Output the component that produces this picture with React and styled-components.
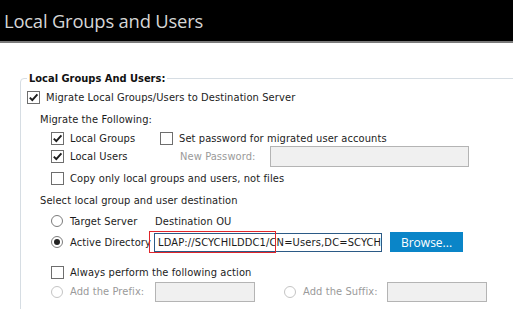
import React from "react";
import styled, { createGlobalStyle, css } from "styled-components";

const Global = createGlobalStyle`
  html, body { margin: 0; padding: 0; background: #fff; overflow: hidden; }
  body { font-family: "DejaVu Sans Condensed", "DejaVu Sans", sans-serif; font-stretch: condensed; font-size: 11px; color: #1c1c1c; letter-spacing: 0.1px; }
`;

const Page = styled.div`
  width: 513px;
  height: 309px;
  overflow: hidden;
`;

const TitleBar = styled.header`
  height: 41px;
  background: #000;
  border-bottom: 2px solid #7a7a7a;
  display: flex;
  align-items: center;
  padding-left: 4px;
`;

const Title = styled.h1`
  margin: 0;
  font-family: "Open Sans", "Noto Sans", sans-serif;
  font-stretch: normal;
  font-weight: 400;
  font-size: 18.4px;
  color: #d6d6d6;
  letter-spacing: -0.2px;
`;

const Group = styled.fieldset`
  margin: 28px 0 0 20px;
  width: 520px;
  height: 260px;
  border: 1px solid #d6dde3;
  border-radius: 4px 0 0 0;
  padding: 0 0 0 6px;
  box-sizing: border-box;
`;

const Legend = styled.legend`
  font-weight: bold;
  padding: 0 2px;
  line-height: 15px;
  color: #111;
  letter-spacing: 0;
`;

const Column = styled.div`
  display: flex;
  flex-direction: column;
`;

const Row = styled.div`
  display: flex;
  align-items: center;
  height: ${(p) => p.$h}px;
  padding-left: ${(p) => p.$indent || 0}px;
  margin-top: ${(p) => p.$mt || 0}px;
  position: relative;
`;

const Cell = styled.div`
  display: flex;
  align-items: center;
  width: ${(p) => (p.$w ? `${p.$w}px` : "auto")};
  flex: none;
  padding-left: ${(p) => p.$pl || 0}px;
  box-sizing: border-box;
`;

const Label = styled.span`
  white-space: nowrap;
  color: ${(p) => (p.$muted ? "#9a9a9a" : "#1c1c1c")};
`;

const Box = styled.span`
  width: 13px;
  height: 13px;
  box-sizing: border-box;
  border: 1px solid #6e6e6e;
  background: #fff;
  display: inline-flex;
  align-items: center;
  justify-content: center;
  flex: none;
  margin-right: 6px;
`;

const Radio = styled.span`
  width: 12px;
  height: 12px;
  box-sizing: border-box;
  border-radius: 50%;
  border: 1px solid ${(p) => (p.$disabled ? "#c4c4c4" : "#7c7c7c")};
  background: #fff;
  display: inline-flex;
  align-items: center;
  justify-content: center;
  flex: none;
  margin-right: 7px;
  ${(p) =>
    p.$checked &&
    css`
      &::after {
        content: "";
        width: 6px;
        height: 6px;
        border-radius: 50%;
        background: #222;
      }
    `}
`;

const TextBox = styled.div`
  width: ${(p) => p.$w}px;
  height: ${(p) => p.$h || 21}px;
  box-sizing: border-box;
  border: 1px solid ${(p) => (p.$active ? "#2b5a86" : "#b4b4b4")};
  background: ${(p) => (p.$active ? "#fff" : "#f0f0f0")};
  flex: none;
  display: flex;
  align-items: center;
  padding-left: 3px;
  overflow: hidden;
  white-space: nowrap;
  margin-left: ${(p) => p.$ml || 0}px;
`;

const Value = styled.span`
  font-size: 11px;
  color: #1a1a1a;
  letter-spacing: 0.15px;
`;

const Button = styled.button`
  margin-left: 8px;
  width: 73px;
  height: 20px;
  border: none;
  background: #0a85c8;
  color: #fff;
  font-family: "Open Sans", "Noto Sans", sans-serif;
  font-size: 12px;
  padding: 0;
  flex: none;
`;

const Highlight = styled.div`
  position: absolute;
  left: 122px;
  top: 0;
  width: 127px;
  height: 22px;
  box-sizing: border-box;
  border: 1px solid #e0262b;
  pointer-events: none;
`;

const Check = () => (
  <svg width="11" height="11" viewBox="0 0 11 11">
    <path d="M1.8 5.6 L4.3 8.2 L9.4 2.3" fill="none" stroke="#1c1c1c" strokeWidth="1.9" />
  </svg>
);

const CheckBox = ({ checked }) => <Box>{checked && <Check />}</Box>;

export default function App() {
  return (
    <Page>
      <Global />
      <TitleBar>
        <Title>Local Groups and Users</Title>
      </TitleBar>
      <Group>
        <Legend>Local Groups And Users:</Legend>
        <Column>
          <Row $h={22}>
            <CheckBox checked />
            <Label>Migrate Local Groups/Users to Destination Server</Label>
          </Row>
          <Row $h={22} $indent={13}>
            <Label>Migrate the Following:</Label>
          </Row>
          <Row $h={16} $indent={24}>
            <Cell $w={109}>
              <CheckBox checked />
              <Label>Local Groups</Label>
            </Cell>
            <Cell>
              <CheckBox />
              <Label>Set password for migrated user accounts</Label>
            </Cell>
          </Row>
          <Row $h={21} $indent={24}>
            <Cell $w={109}>
              <CheckBox checked />
              <Label>Local Users</Label>
            </Cell>
            <Cell $w={110} $pl={20}>
              <Label $muted>New Password:</Label>
            </Cell>
            <TextBox $w={199} />
          </Row>
          <Row $h={22} $indent={24}>
            <CheckBox />
            <Label>Copy only local groups and users, not files</Label>
          </Row>
          <Row $h={22} $indent={13}>
            <Label>Select local group and user destination</Label>
          </Row>
          <Row $h={20} $indent={24}>
            <Cell $w={104}>
              <Radio />
              <Label>Target Server</Label>
            </Cell>
            <Label>Destination OU</Label>
          </Row>
          <Row $h={22} $indent={24}>
            <Cell $w={103}>
              <Radio $checked />
              <Label>Active Directory</Label>
            </Cell>
            <TextBox $w={228} $h={19} $active>
              <Value>LDAP://SCYCHILDDC1/CN=Users,DC=SCYCH</Value>
            </TextBox>
            <Button>Browse...</Button>
            <Highlight />
          </Row>
          <Row $h={18} $indent={24} $mt={10}>
            <CheckBox />
            <Label>Always perform the following action</Label>
          </Row>
          <Row $h={21} $indent={24}>
            <Cell $w={104}>
              <Radio $disabled />
              <Label $muted>Add the Prefix:</Label>
            </Cell>
            <TextBox $w={100} $h={20} />
            <Cell $pl={29}>
              <Radio $disabled />
              <Label $muted>Add the Suffix:</Label>
            </Cell>
            <TextBox $w={100} $h={20} $ml={9} />
          </Row>
        </Column>
      </Group>
    </Page>
  );
}
